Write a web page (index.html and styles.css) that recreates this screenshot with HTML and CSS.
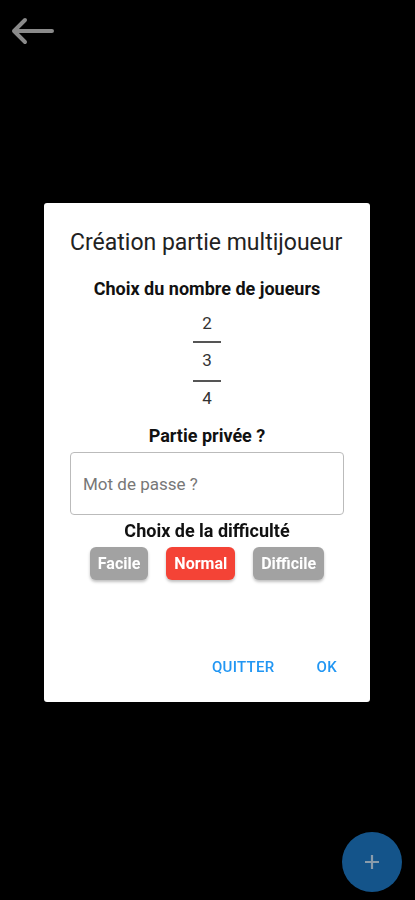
FILE: index.html
```html
<!DOCTYPE html>
<html lang="fr">
<head>
    <meta charset="UTF-8">
    <meta name="viewport" content="width=device-width, initial-scale=1.0">
    <title>Multijoueur</title>
    <link rel="stylesheet" href="styles.css">
</head>
<body>
    <header class="top-bar">
        <svg class="back-arrow" width="44" height="30" viewBox="0 0 44 30">
            <path d="M42 15 H4 M15 4 L4 15 L15 26" fill="none" stroke="#8a8a8a" stroke-width="4" stroke-linecap="round" stroke-linejoin="round"/>
        </svg>
    </header>

    <div class="fab">
        <svg width="18" height="18" viewBox="0 0 18 18">
            <path d="M9 2 V16 M2 9 H16" stroke="#8a9cab" stroke-width="2.2"/>
        </svg>
    </div>

    <div class="overlay">
        <div class="dialog">
            <h2 class="dialog-title">Création partie multijoueur</h2>
            <div class="dialog-body">
                <p class="label first">Choix du nombre de joueurs</p>
                <div class="picker">
                    <span class="picker-item">2</span>
                    <span class="picker-item selected">3</span>
                    <span class="picker-item">4</span>
                </div>
                <p class="label">Partie privée ?</p>
                <div class="input-box">
                    <input type="text" placeholder="Mot de passe ?">
                </div>
                <p class="label">Choix de la difficulté</p>
                <div class="levels">
                    <button class="level">Facile</button>
                    <button class="level active">Normal</button>
                    <button class="level">Difficile</button>
                </div>
            </div>
            <div class="dialog-actions">
                <button class="text-button">QUITTER</button>
                <button class="text-button">OK</button>
            </div>
        </div>
    </div>
</body>
</html>
```

FILE: styles.css
```css
body {
    font-family: Roboto, "Noto Sans", Arial, sans-serif;
    margin: 0;
    padding: 0;
    background-color: #000;
    height: 900px;
    overflow: hidden;
}

.top-bar {
    padding: 16px 0 0 10px;
    height: 40px;
}

.back-arrow {
    display: block;
}

.fab {
    position: fixed;
    right: 13px;
    bottom: 8px;
    width: 60px;
    height: 60px;
    border-radius: 50%;
    background-color: #14548a;
    display: flex;
    align-items: center;
    justify-content: center;
}

.overlay {
    position: fixed;
    inset: 0;
    display: flex;
    align-items: center;
    justify-content: center;
}

.dialog {
    width: 326px;
    height: 499px;
    margin: 5px 1px 0 0;
    background-color: #fff;
    border-radius: 3px;
    display: flex;
    flex-direction: column;
    box-sizing: border-box;
}

.dialog-title {
    margin: 0;
    padding: 26px 0 0 26px;
    font-size: 23px;
    font-weight: 400;
    line-height: 28px;
    color: #222;
}

.dialog-body {
    flex: 1;
    display: flex;
    flex-direction: column;
    align-items: center;
    padding: 0 26px;
}

.label {
    margin: 5px 0 0;
    font-size: 18px;
    font-weight: bold;
    line-height: 22px;
    color: #111;
}

.label.first {
    margin-top: 21px;
}

.picker {
    display: flex;
    flex-direction: column;
    align-items: center;
    margin: 13px 0 12px;
}

.picker-item {
    font-size: 17px;
    line-height: 20px;
    color: #333;
    width: 28px;
    text-align: center;
}

.picker-item.selected {
    border-top: 2px solid #555;
    border-bottom: 2px solid #555;
    padding: 7px 0 10px;
    margin: 8px 0 6px;
}

.input-box {
    align-self: stretch;
    margin: 5px 0 0;
    height: 63px;
    border: 1px solid #bbb;
    border-radius: 4px;
    box-sizing: border-box;
    display: flex;
    align-items: center;
}

.input-box input {
    border: none;
    outline: none;
    background: transparent;
    font-family: Roboto, "Noto Sans", Arial, sans-serif;
    font-size: 17px;
    padding: 0 12px;
    width: 100%;
    color: #333;
}

.input-box input::placeholder {
    color: #777;
}

.levels {
    display: flex;
    gap: 18px;
    margin-top: 5px;
}

.level {
    height: 33px;
    padding: 0 8px;
    border: none;
    border-radius: 6px;
    background-color: #a2a2a2;
    color: #fff;
    font-family: Roboto, "Noto Sans", Arial, sans-serif;
    font-size: 16px;
    font-weight: bold;
    box-shadow: 0 2px 3px rgba(0, 0, 0, 0.25);
}

.level.active {
    background-color: #f44336;
}

.dialog-actions {
    display: flex;
    justify-content: flex-end;
    gap: 26px;
    padding: 0 25px 20px 0;
}

.text-button {
    background: none;
    border: none;
    font-family: Roboto, "Noto Sans", Arial, sans-serif;
    font-size: 15px;
    line-height: 17px;
    font-weight: 500;
    color: #2196f3;
    padding: 6px 8px;
    letter-spacing: 0.3px;
}
```
